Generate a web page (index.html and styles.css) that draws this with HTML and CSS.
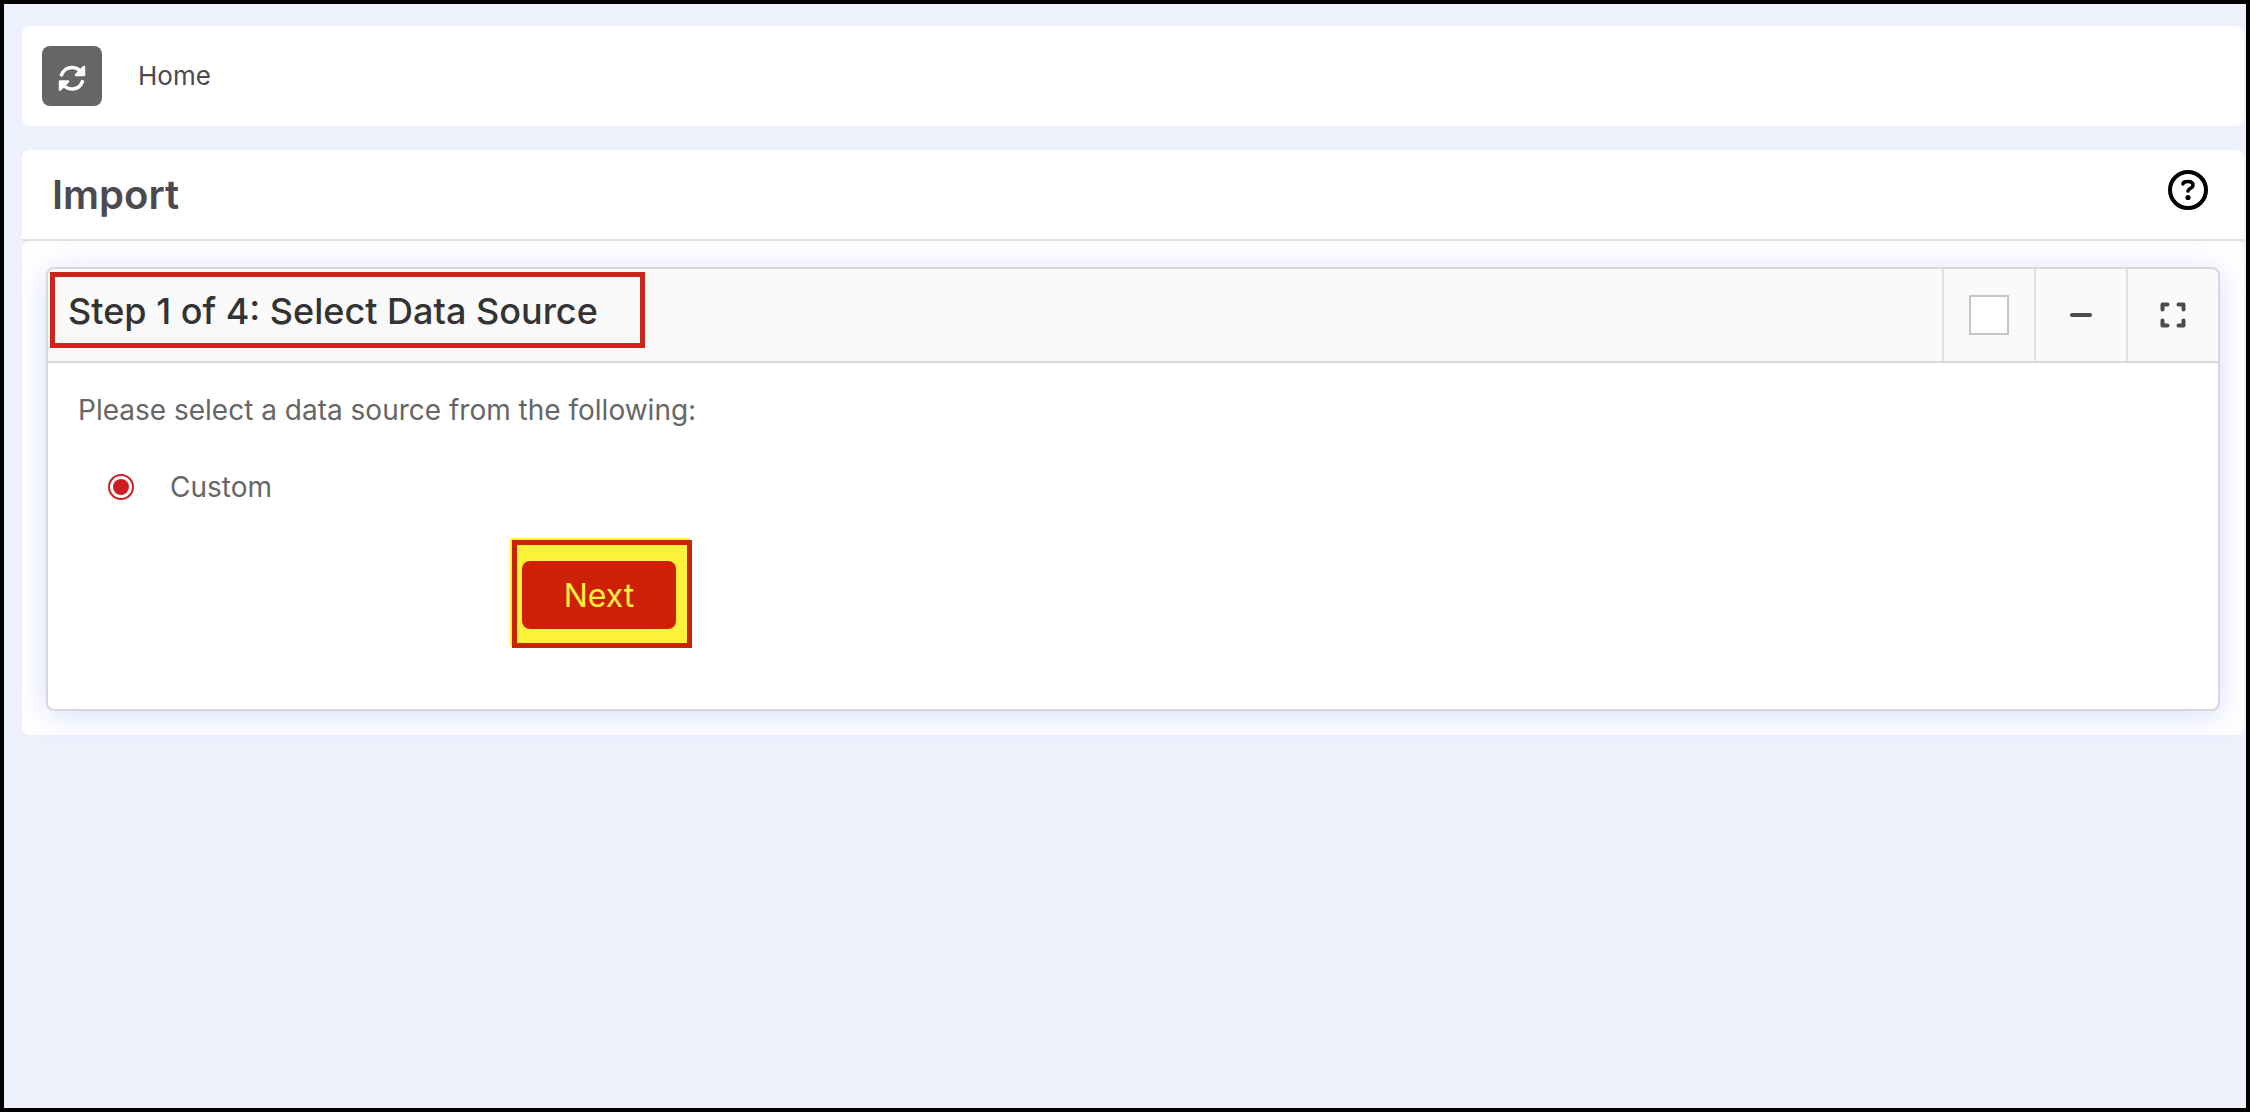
FILE: index.html
```html
<!DOCTYPE html>
<html lang="en">
<head>
  <meta charset="UTF-8">
  <meta name="viewport" content="width=device-width, initial-scale=1.0">
  <title>Import</title>
  <link rel="stylesheet" href="styles.css">
</head>
<body>

  <nav class="topbar">
    <button class="refresh" type="button" aria-label="Refresh">
      <svg width="28" height="28" viewBox="0 0 28 28" fill="none" stroke="#fff" stroke-width="3.5" stroke-linecap="round" stroke-linejoin="round">
        <path d="M3.500 11C5.500 6 9.500 3.500 14 3.500c4 0 7.500 2 9.500 5.500"/>
        <path d="M26 3v8h-8z" fill="#fff" stroke-width="2.500"/>
        <path d="M24.500 17.500c-2 5-6 7.500-10.500 7.500-4 0-7.500-2-9.500-5.500"/>
        <path d="M2 25.500v-8h8z" fill="#fff" stroke-width="2.500"/>
      </svg>
    </button>
    <a class="crumb" href="#">Home</a>
  </nav>

  <header class="page-head">
    <h1>Import</h1>
    <button class="icon-btn" type="button" aria-label="Help">
      <svg width="40" height="40" viewBox="0 0 40 40" fill="none" stroke="#000" stroke-width="4" stroke-linecap="round" stroke-linejoin="round">
        <circle cx="20" cy="20" r="18"/>
        <path d="M15 14c0-1.500 2-2.500 5-2.500s5 1.300 5 3.700c0 3-4.500 3-5 5.800" stroke-width="3.600"/>
        <circle cx="20" cy="27.500" r="2.600" fill="#000" stroke="none"/>
      </svg>
    </button>
  </header>

  <main class="page-body">
    <form class="panel">
      <div class="panel-head">
        <h2 class="marked">Step 1 of 4: Select Data Source</h2>
        <div class="tools">
          <label class="tool"><input class="check" type="checkbox" aria-label="Select panel"></label>
          <button class="tool" type="button" aria-label="Collapse">
            <svg width="24" height="24" viewBox="0 0 24 24" stroke="#4a4a50" stroke-width="4" stroke-linecap="round">
              <path d="M3 12h18"/>
            </svg>
          </button>
          <button class="tool" type="button" aria-label="Full screen">
            <svg width="26" height="26" viewBox="0 0 26 26" fill="none" stroke="#4a4a50" stroke-width="4" stroke-linecap="round" stroke-linejoin="round">
              <path d="M2.500 7.500v-5h5M18.500 2.500h5v5M23.500 18.500v5h-5M7.500 23.500h-5v-5"/>
            </svg>
          </button>
        </div>
      </div>
      <div class="panel-body">
        <p>Please select a data source from the following:</p>
        <label class="option"><input class="radio" type="radio" name="source" checked>Custom</label>
        <div class="highlight">
          <button class="next" type="button">Next</button>
        </div>
      </div>
    </form>
  </main>

</body>
</html>
```

FILE: styles.css
```css
* {
  box-sizing: border-box;
}

body {
  margin: 0;
  min-height: 100vh;
  padding: 22px 2px 22px 18px;
  border: 4px solid #000;
  background: #eef0fc;
  font-family: Inter, "Liberation Sans", sans-serif;
  font-size: 28px;
  color: #666;
}

button {
  padding: 0;
  border: 0;
  background: none;
  font: inherit;
  cursor: pointer;
}

svg {
  display: block;
}

h1,
h2,
p {
  margin: 0;
}

.topbar {
  display: flex;
  align-items: center;
  gap: 36px;
  height: 100px;
  padding: 0 20px;
  margin-bottom: 24px;
  border-radius: 8px;
  background: #fff;
}

.refresh {
  display: grid;
  place-items: center;
  width: 60px;
  height: 60px;
  padding-top: 4px;
  border-radius: 8px;
  background: #666;
}

.crumb {
  padding-bottom: 2px;
  color: #4a4a50;
  font-size: 26px;
  text-decoration: none;
}

.page-head {
  display: flex;
  align-items: center;
  justify-content: space-between;
  height: 91px;
  padding: 0 36px 10px 30px;
  border-bottom: 2px solid #e0e0e2;
  border-radius: 8px 8px 0 0;
  background: #fff;
}

.page-head h1 {
  padding-top: 10px;
  color: #4a4a50;
  font-size: 40px;
  font-weight: 600;
}

.page-body {
  padding: 26px 24px 24px;
  border-radius: 8px;
  background: #fff;
}

.panel {
  border: 2px solid #d7d7dc;
  border-radius: 8px;
  background: #fff;
  box-shadow: 0 4px 30px rgba(100, 120, 255, 0.25);
}

.panel-head {
  display: flex;
  justify-content: space-between;
  height: 94px;
  border-bottom: 2px solid #d7d7dc;
  border-radius: 8px 8px 0 0;
  background: #fafafa;
}

.marked {
  height: 76px;
  padding: 0 42px 0 13px;
  margin: 3px 0 0 2px;
  border: 5px solid #c9261c;
  color: #333;
  font-size: 36px;
  font-weight: 500;
  line-height: 68px;
}

.tools {
  display: flex;
}

.tool {
  display: grid;
  place-items: center;
  width: 92px;
  border-left: 2px solid #e0e0e2;
}

.check {
  appearance: none;
  width: 40px;
  height: 40px;
  margin: 0;
  border: 2px solid #c6c6c6;
  background: #fff;
}

.panel-body {
  padding: 29px 30px 61px;
}

.panel-body p {
  line-height: 36px;
}

.option {
  display: flex;
  align-items: center;
  gap: 36px;
  padding-left: 30px;
  margin: 41px 0 35px;
  line-height: 36px;
}

.radio {
  appearance: none;
  width: 26px;
  height: 26px;
  margin: 0;
  border: 2px solid #cc1f1f;
  border-radius: 50%;
  background: #cc1f1f content-box;
  padding: 3px;
}

.highlight {
  width: 180px;
  height: 108px;
  padding: 16px 5px;
  margin-left: 434px;
  border: 5px solid #c82406;
  background: #fff23a;
  box-shadow: -2px -2px 0 #fff23a;
}

.next {
  width: 154px;
  height: 68px;
  border-radius: 8px;
  background: #cf1f06;
  color: #fff23a;
  font-size: 32px;
}
```
